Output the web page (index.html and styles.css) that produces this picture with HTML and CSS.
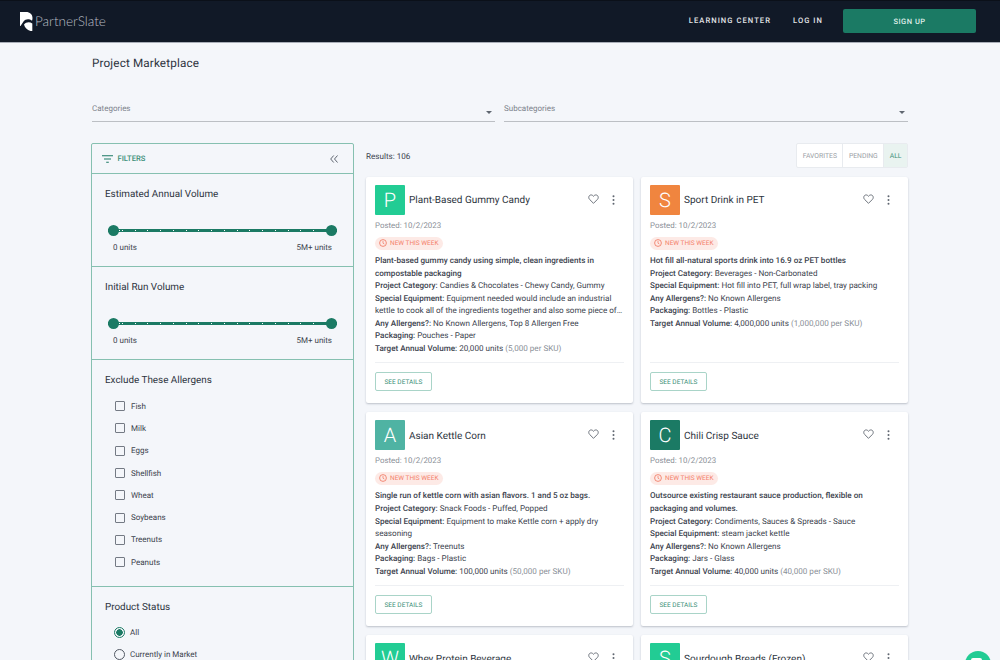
FILE: index.html
```html
<!DOCTYPE html>
<html lang="en">
<head>
<meta charset="utf-8">
<title>Project Marketplace</title>
<link rel="stylesheet" href="styles.css">
</head>
<body>
<header class="topbar">
  <a class="logo">
    <svg class="logo-mark" width="13" height="19" viewBox="0 0 13 19"><path d="M0 0h6C10 0 12.500 2.500 12.500 6c0 1-.2 2-.5 2.800C9 6.500 5.500 7 3.500 9.500 2.500 11 1.500 12.500.5 14H0z" fill="#fff"/><path d="M4 12.500C6 10 9.500 9.500 12.300 11.500V19H10.500C7 18 4.800 15.500 4 12.500z" fill="#fff"/></svg>
    <span class="logo-text">PartnerSlate</span>
  </a>
  <nav class="topnav">
    <a class="navlink">LEARNING CENTER</a>
    <a class="navlink">LOG IN</a>
    <a class="signup">SIGN UP</a>
  </nav>
</header>
<main class="page">
  <h1 class="page-title">Project Marketplace</h1>
  <div class="selects">
    <div class="select"><span>Categories</span><i class="caret"></i></div>
    <div class="select"><span>Subcategories</span><i class="caret"></i></div>
  </div>
  <div class="layout">
    <aside class="filters">
      <div class="filters-head">
        <svg width="11" height="8" viewBox="0 0 11 8"><path d="M0 .75h11M2 4h7M4.200 7.250h2.600" stroke="#1b7a64" stroke-width="1.200" fill="none"/></svg>
        <span class="filters-label">FILTERS</span>
        <svg class="collapse" width="8" height="8" viewBox="0 0 8 8"><path d="M3.700.5.700 4l3 3.500M7.500.5 4.500 4l3 3.500" stroke="#5f6670" stroke-width="1" fill="none"/></svg>
      </div>
      <section class="fsec slider-sec">
        <h3>Estimated Annual Volume</h3>
        <div class="slider"><i class="thumb"></i><span class="ticks"></span><i class="thumb"></i></div>
        <div class="slider-labels"><span>0 units</span><span>5M+ units</span></div>
      </section>
      <section class="fsec slider-sec">
        <h3>Initial Run Volume</h3>
        <div class="slider"><i class="thumb"></i><span class="ticks"></span><i class="thumb"></i></div>
        <div class="slider-labels"><span>0 units</span><span>5M+ units</span></div>
      </section>
      <section class="fsec allergens">
        <h3>Exclude These Allergens</h3>
        <ul class="opts">
          <li><i class="box"></i>Fish</li>
          <li><i class="box"></i>Milk</li>
          <li><i class="box"></i>Eggs</li>
          <li><i class="box"></i>Shellfish</li>
          <li><i class="box"></i>Wheat</li>
          <li><i class="box"></i>Soybeans</li>
          <li><i class="box"></i>Treenuts</li>
          <li><i class="box"></i>Peanuts</li>
        </ul>
      </section>
      <section class="fsec status">
        <h3>Product Status</h3>
        <ul class="opts">
          <li><i class="radio on"></i>All</li>
          <li><i class="radio"></i>Currently in Market</li>
        </ul>
      </section>
    </aside>
    <div class="results">
      <div class="results-bar">
        <span class="count">Results: 106</span>
        <div class="toggle"><span>FAVORITES</span><span>PENDING</span><span class="active">ALL</span></div>
      </div>
      <div class="grid">
        <article class="card">
          <div class="card-head">
            <span class="avatar green">P</span><h2>Plant-Based Gummy Candy</h2>
            <svg class="heart" width="11" height="10" viewBox="0 0 24 22"><path d="M12 20.500 3.500 12C1 9.500 1 5.700 3.200 3.500 5.500 1.300 9.300 1.500 12 5c2.700-3.500 6.500-3.700 8.800-1.500C23 5.700 23 9.500 20.500 12z" fill="none" stroke="#5f6670" stroke-width="2"/></svg>
            <svg class="more" width="3" height="10" viewBox="0 0 3 10"><circle cx="1.500" cy="1.300" r="1"/><circle cx="1.500" cy="5" r="1"/><circle cx="1.500" cy="8.700" r="1"/></svg>
          </div>
          <div class="posted">Posted: 10/2/2023</div>
          <div class="badge"><svg width="8" height="8" viewBox="0 0 8 8"><circle cx="4" cy="4" r="3.400" fill="none" stroke="#f0745c" stroke-width=".8"/><path d="M4 2v2.200l1.400.8" fill="none" stroke="#f0745c" stroke-width=".7"/></svg>NEW THIS WEEK</div>
          <p class="lead">Plant-based gummy candy using simple, clean ingredients in compostable packaging</p>
          <p><b>Project Category:</b> Candies &amp; Chocolates - Chewy Candy, Gummy</p>
          <p class="clamp"><b>Special Equipment:</b> Equipment needed would include an industrial kettle to cook all of the ingredients together and also some piece of equipment to deposit into molds</p>
          <p><b>Any Allergens?:</b> No Known Allergens, Top 8 Allergen Free</p>
          <p><b>Packaging:</b> Pouches - Paper</p>
          <p class="last"><b>Target Annual Volume:</b> 20,000 units <em>(5,000 per SKU)</em></p>
          <div class="card-foot"><a class="details">SEE DETAILS</a></div>
        </article>
        <article class="card">
          <div class="card-head">
            <span class="avatar orange">S</span><h2>Sport Drink in PET</h2>
            <svg class="heart" width="11" height="10" viewBox="0 0 24 22"><path d="M12 20.500 3.500 12C1 9.500 1 5.700 3.200 3.500 5.500 1.300 9.300 1.500 12 5c2.700-3.500 6.500-3.700 8.800-1.500C23 5.700 23 9.500 20.500 12z" fill="none" stroke="#5f6670" stroke-width="2"/></svg>
            <svg class="more" width="3" height="10" viewBox="0 0 3 10"><circle cx="1.500" cy="1.300" r="1"/><circle cx="1.500" cy="5" r="1"/><circle cx="1.500" cy="8.700" r="1"/></svg>
          </div>
          <div class="posted">Posted: 10/2/2023</div>
          <div class="badge"><svg width="8" height="8" viewBox="0 0 8 8"><circle cx="4" cy="4" r="3.400" fill="none" stroke="#f0745c" stroke-width=".8"/><path d="M4 2v2.200l1.400.8" fill="none" stroke="#f0745c" stroke-width=".7"/></svg>NEW THIS WEEK</div>
          <p class="lead">Hot fill all-natural sports drink into 16.9 oz PET bottles</p>
          <p><b>Project Category:</b> Beverages - Non-Carbonated</p>
          <p><b>Special Equipment:</b> Hot fill into PET, full wrap label, tray packing</p>
          <p><b>Any Allergens?:</b> No Known Allergens</p>
          <p><b>Packaging:</b> Bottles - Plastic</p>
          <p class="last"><b>Target Annual Volume:</b> 4,000,000 units <em>(1,000,000 per SKU)</em></p>
          <div class="card-foot"><a class="details">SEE DETAILS</a></div>
        </article>
        <article class="card">
          <div class="card-head">
            <span class="avatar teal">A</span><h2>Asian Kettle Corn</h2>
            <svg class="heart" width="11" height="10" viewBox="0 0 24 22"><path d="M12 20.500 3.500 12C1 9.500 1 5.700 3.200 3.500 5.500 1.300 9.300 1.500 12 5c2.700-3.500 6.500-3.700 8.800-1.500C23 5.700 23 9.500 20.500 12z" fill="none" stroke="#5f6670" stroke-width="2"/></svg>
            <svg class="more" width="3" height="10" viewBox="0 0 3 10"><circle cx="1.500" cy="1.300" r="1"/><circle cx="1.500" cy="5" r="1"/><circle cx="1.500" cy="8.700" r="1"/></svg>
          </div>
          <div class="posted">Posted: 10/2/2023</div>
          <div class="badge"><svg width="8" height="8" viewBox="0 0 8 8"><circle cx="4" cy="4" r="3.400" fill="none" stroke="#f0745c" stroke-width=".8"/><path d="M4 2v2.200l1.400.8" fill="none" stroke="#f0745c" stroke-width=".7"/></svg>NEW THIS WEEK</div>
          <p class="lead">Single run of kettle corn with asian flavors. 1 and 5 oz bags.</p>
          <p><b>Project Category:</b> Snack Foods - Puffed, Popped</p>
          <p><b>Special Equipment:</b> Equipment to make Kettle corn + apply dry seasoning</p>
          <p><b>Any Allergens?:</b> Treenuts</p>
          <p><b>Packaging:</b> Bags - Plastic</p>
          <p class="last"><b>Target Annual Volume:</b> 100,000 units <em>(50,000 per SKU)</em></p>
          <div class="card-foot"><a class="details">SEE DETAILS</a></div>
        </article>
        <article class="card">
          <div class="card-head">
            <span class="avatar dark">C</span><h2>Chili Crisp Sauce</h2>
            <svg class="heart" width="11" height="10" viewBox="0 0 24 22"><path d="M12 20.500 3.500 12C1 9.500 1 5.700 3.200 3.500 5.500 1.300 9.300 1.500 12 5c2.700-3.500 6.500-3.700 8.800-1.500C23 5.700 23 9.500 20.500 12z" fill="none" stroke="#5f6670" stroke-width="2"/></svg>
            <svg class="more" width="3" height="10" viewBox="0 0 3 10"><circle cx="1.500" cy="1.300" r="1"/><circle cx="1.500" cy="5" r="1"/><circle cx="1.500" cy="8.700" r="1"/></svg>
          </div>
          <div class="posted">Posted: 10/2/2023</div>
          <div class="badge"><svg width="8" height="8" viewBox="0 0 8 8"><circle cx="4" cy="4" r="3.400" fill="none" stroke="#f0745c" stroke-width=".8"/><path d="M4 2v2.200l1.400.8" fill="none" stroke="#f0745c" stroke-width=".7"/></svg>NEW THIS WEEK</div>
          <p class="lead">Outsource existing restaurant sauce production, flexible on packaging and volumes.</p>
          <p><b>Project Category:</b> Condiments, Sauces &amp; Spreads - Sauce</p>
          <p><b>Special Equipment:</b> steam jacket kettle</p>
          <p><b>Any Allergens?:</b> No Known Allergens</p>
          <p><b>Packaging:</b> Jars - Glass</p>
          <p class="last"><b>Target Annual Volume:</b> 40,000 units <em>(40,000 per SKU)</em></p>
          <div class="card-foot"><a class="details">SEE DETAILS</a></div>
        </article>
        <article class="card">
          <div class="card-head">
            <span class="avatar green">W</span><h2>Whey Protein Beverage</h2>
            <svg class="heart" width="11" height="10" viewBox="0 0 24 22"><path d="M12 20.500 3.500 12C1 9.500 1 5.700 3.200 3.500 5.500 1.300 9.300 1.500 12 5c2.700-3.500 6.500-3.700 8.800-1.500C23 5.700 23 9.500 20.500 12z" fill="none" stroke="#5f6670" stroke-width="2"/></svg>
            <svg class="more" width="3" height="10" viewBox="0 0 3 10"><circle cx="1.500" cy="1.300" r="1"/><circle cx="1.500" cy="5" r="1"/><circle cx="1.500" cy="8.700" r="1"/></svg>
          </div>
        </article>
        <article class="card">
          <div class="card-head">
            <span class="avatar green">S</span><h2>Sourdough Breads (Frozen)</h2>
            <svg class="heart" width="11" height="10" viewBox="0 0 24 22"><path d="M12 20.500 3.500 12C1 9.500 1 5.700 3.200 3.500 5.500 1.300 9.300 1.500 12 5c2.700-3.500 6.500-3.700 8.800-1.500C23 5.700 23 9.500 20.500 12z" fill="none" stroke="#5f6670" stroke-width="2"/></svg>
            <svg class="more" width="3" height="10" viewBox="0 0 3 10"><circle cx="1.500" cy="1.300" r="1"/><circle cx="1.500" cy="5" r="1"/><circle cx="1.500" cy="8.700" r="1"/></svg>
          </div>
        </article>
      </div>
    </div>
  </div>
</main>
<span class="chat"></span>
</body>
</html>
```

FILE: styles.css
```css
* { box-sizing: border-box; }
html, body { margin: 0; height: 660px; overflow: hidden; }
body { background: #f4f6fa; color: #2d3440; font-family: Roboto, sans-serif; position: relative; text-rendering: geometricPrecision; }
h1, h2, h3, p, ul { margin: 0; padding: 0; font-weight: 400; }
ul { list-style: none; }
.topbar { height: 43px; background: #111927; border-top: 1px solid #0b1019; border-bottom: 1px solid #a9aeb8; display: flex; align-items: center; justify-content: space-between; padding: 0 24px 0 20px; }
.logo { display: flex; align-items: center; gap: 2px; margin-top: -1px; }
.logo-text { color: #b9bdc4; font-family: Lato, sans-serif; font-size: 13.500px; font-weight: 300; }
.topnav { display: flex; align-items: center; }
.navlink { color: #e3e5e8; font-size: 7.600px; font-weight: 500; letter-spacing: 1.050px; margin-right: 22px; margin-top: -3px; }
.signup { width: 133px; height: 24px; background: #1b7a64; border-radius: 2px; color: #dfeee9; font-size: 7.500px; font-weight: 500; letter-spacing: .5px; display: flex; align-items: center; justify-content: center; margin-left: -2px; margin-top: -1px; }
.page { width: 816px; margin-left: 92px; }
.page-title { font-size: 11.700px; line-height: 16px; margin-top: 12px; color: #2d3440; letter-spacing: .15px; }
.selects { display: grid; grid-template-columns: 403px 404px; gap: 9px; margin-top: 30px; }
.select { height: 21px; border-bottom: 1px solid #bcbfc4; display: flex; justify-content: space-between; font-size: 8px; color: #7d838c; padding-top: 3px; position: relative; }
.caret { width: 0; height: 0; border: 3px solid transparent; border-top: 3.500px solid #5f6670; margin-top: 7px; margin-right: 3px; }
.layout { display: grid; grid-template-columns: 263px 542px; gap: 12px; margin-top: 21px; margin-left: -1px; }
.filters { border: 1px solid #86c0b0; border-radius: 2px; }
.filters-head { height: 30px; border-bottom: 1px solid #86c0b0; display: flex; align-items: center; padding: 0 15px 0 10px; gap: 4.500px; }
.filters-label { font-size: 7.600px; color: #3c9079; font-weight: 500; flex: 1; }
.fsec { border-bottom: 1px solid #86c0b0; padding: 14px 13px 0; }
.fsec h3 { font-size: 9.900px; line-height: 14px; color: #2d3440; }
.slider-sec { height: 93px; }
.slider { margin: 22px 3px 0 3px; height: 12px; display: flex; align-items: center; background: linear-gradient(#1b7a64, #1b7a64) center / 100% 3px no-repeat; }
.thumb { width: 11px; height: 11px; border-radius: 50%; background: #1b7a64; flex: none; }
.ticks { flex: 1; height: 1px; background: repeating-linear-gradient(90deg, #fff 0 1px, transparent 1px 12.750px); background-position: 3px 0; }
.slider-labels { display: flex; justify-content: space-between; font-size: 8px; color: #3b424d; margin: 6px 8px 0 8px; line-height: 12px; }
.allergens { height: 227px; }
.opts { margin-top: 7px; font-size: 8px; color: #3b424d; }
.status .opts { margin-top: 6.500px; }
.opts li { height: 22.300px; display: flex; align-items: center; gap: 6px; padding-left: 10px; }
.box { width: 10px; height: 10px; border: 1.200px solid #747a84; border-radius: 1px; }
.radio { width: 11px; height: 11px; border: 1.100px solid #525964; border-radius: 50%; margin-right: -1px; margin-left: -1px; }
.radio.on { border-color: #1b7a64; background: radial-gradient(circle, #1b7a64 0 3px, transparent 3.500px); }
.status { border-bottom: 0; }
.results-bar { height: 26px; display: flex; align-items: center; justify-content: space-between; margin-bottom: 8px; margin-top: 0; }
.count { font-size: 8.100px; color: #3b424d; }
.toggle { display: flex; height: 25px; align-self: flex-start; border: 1px solid #e8ebef; border-radius: 2px; background: #fff; font-size: 6.800px; color: #9a9ea5; }
.toggle span { display: flex; align-items: center; padding: 0 5.500px; border-right: 1px solid #e8ebef; }
.toggle span:last-child { border-right: 0; }
.toggle .active { background: #e9f3f0; color: #3c9079; }
.grid { display: grid; grid-template-columns: 267px 267px; gap: 9px 8px; }
.card { background: #fff; border-radius: 2px; box-shadow: 0 1px 2px rgba(60,70,90,.3); padding: 8px 9px 12px; display: flex; flex-direction: column; font-size: 8.100px; line-height: 12.550px; color: #3b424d; }
.card-head { display: flex; align-items: center; height: 30px; }
.card-head h2 { font-size: 10px; flex: 1; margin-left: 4px; margin-top: 3px; color: #2d3440; }
.avatar { width: 30px; height: 30px; border-radius: 1px; color: #fff; font-size: 20px; font-weight: 300; display: flex; align-items: center; justify-content: center; flex: none; }
.green { background: #22cc94; }
.orange { background: #f0853f; }
.teal { background: #4fb3a3; }
.dark { background: #1b7a64; }
.heart { margin-right: 13px; margin-top: -2px; }
.more { margin-right: 9px; fill: #5f6670; }
.posted { color: #8a8f97; margin-top: 5px; font-size: 7.900px; }
.badge { align-self: flex-start; height: 13px; margin-top: 4px; margin-bottom: 4.500px; padding: 0 4px; border-radius: 7px; background: #fdeae6; color: #f4826c; font-size: 6.500px; display: flex; align-items: center; gap: 3px; }
.lead { font-weight: 500; }
.card b { font-weight: 500; }
.card em { font-style: normal; color: #8a8f97; }
.clamp { display: -webkit-box; -webkit-line-clamp: 2; -webkit-box-orient: vertical; overflow: hidden; }
.last { margin-bottom: 8px; }
.card-foot { margin-top: auto; border-top: 1px solid #eef0f3; padding-top: 9px; }
.details { display: inline-flex; align-items: center; height: 19px; padding: 0 8.500px; border: 1px solid #a9d4c8; border-radius: 2px; color: #3c9079; font-size: 6.500px; }
.chat { position: absolute; right: 9px; top: 651px; width: 26px; height: 26px; border-radius: 50%; background: #22cc94; }
.chat::after { content: ""; position: absolute; left: 6px; top: 7px; width: 11px; height: 9px; border-radius: 2px; background: #fff; }
```
